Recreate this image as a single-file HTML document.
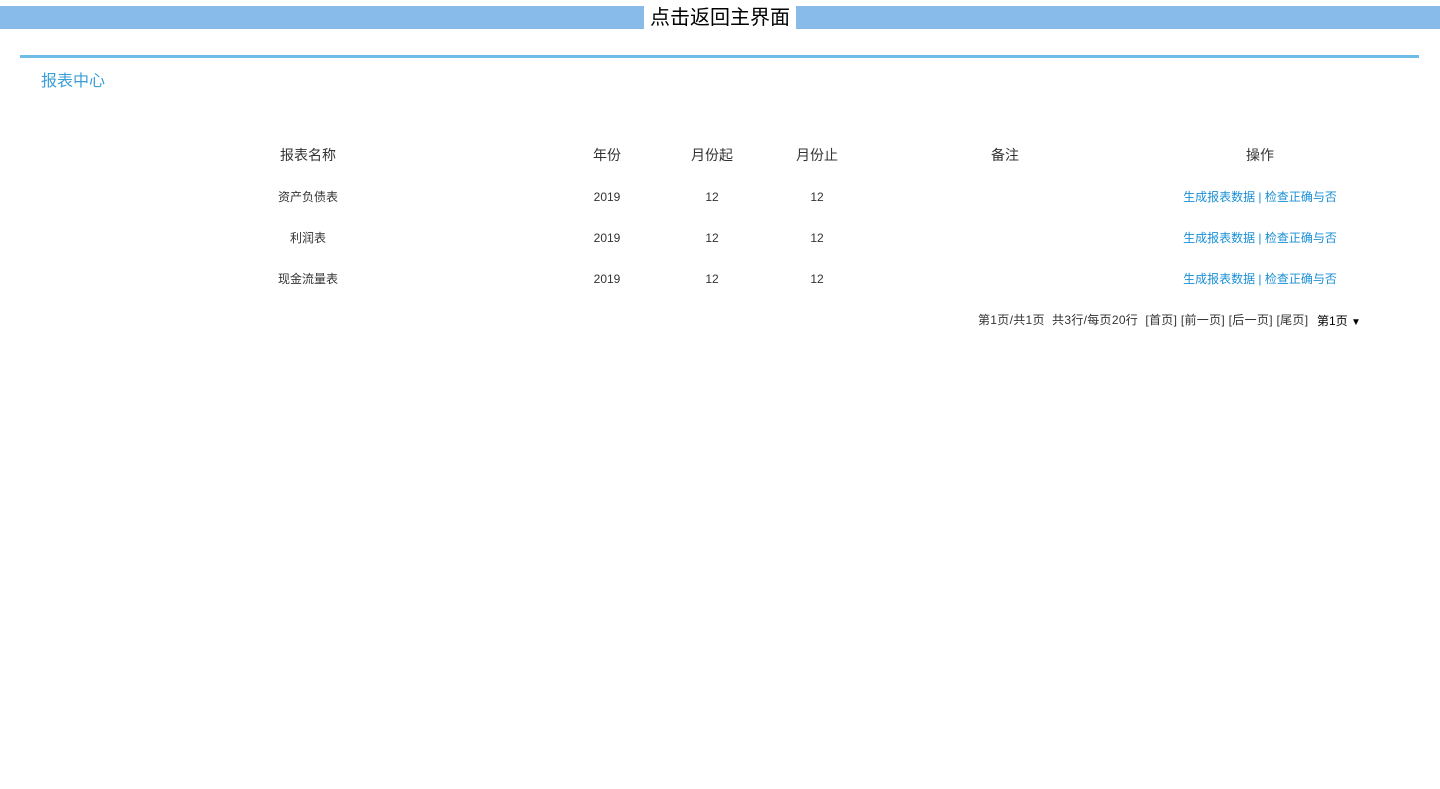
<!DOCTYPE html>
<html><head><meta charset="utf-8"><style>
body{margin:0;width:1440px;height:789px;background:#fff;position:relative;font-family:"Liberation Sans","Noto Sans CJK SC",sans-serif;overflow:hidden}
.a{position:absolute;white-space:nowrap}
.c{transform:translateX(-50%)}
.h{font-size:14px;color:#333;line-height:20px}
.d{font-size:12px;color:#333;line-height:16px}
.l{color:#1a8fd6}
</style></head><body>
<div class="a" style="left:0;top:6px;width:1440px;height:23px;background:#88bbea"></div>
<div class="a" style="left:644px;top:6px;width:152px;height:23px;background:#fff;font-size:20px;line-height:25px;text-align:center;color:#000">点击返回主界面</div>
<div class="a" style="left:20px;top:55px;width:1399px;height:3px;background:#6dbde8"></div>
<div class="a" style="left:41px;top:72px;font-size:16px;line-height:20px;color:#3a9fd8">报表中心</div>

<div class="a c h" style="left:308px;top:145px">报表名称</div>
<div class="a c h" style="left:607px;top:145px">年份</div>
<div class="a c h" style="left:712px;top:145px">月份起</div>
<div class="a c h" style="left:817px;top:145px">月份止</div>
<div class="a c h" style="left:1005px;top:145px">备注</div>
<div class="a c h" style="left:1260px;top:145px">操作</div>

<div class="a c d" style="left:308px;top:189px">资产负债表</div>
<div class="a c d" style="left:607px;top:189px">2019</div>
<div class="a c d" style="left:712px;top:189px">12</div>
<div class="a c d" style="left:817px;top:189px">12</div>
<div class="a c d l" style="left:1260px;top:189px">生成报表数据 | 检查正确与否</div>

<div class="a c d" style="left:308px;top:230px">利润表</div>
<div class="a c d" style="left:607px;top:230px">2019</div>
<div class="a c d" style="left:712px;top:230px">12</div>
<div class="a c d" style="left:817px;top:230px">12</div>
<div class="a c d l" style="left:1260px;top:230px">生成报表数据 | 检查正确与否</div>

<div class="a c d" style="left:308px;top:271px">现金流量表</div>
<div class="a c d" style="left:607px;top:271px">2019</div>
<div class="a c d" style="left:712px;top:271px">12</div>
<div class="a c d" style="left:817px;top:271px">12</div>
<div class="a c d l" style="left:1260px;top:271px">生成报表数据 | 检查正确与否</div>

<div class="a d" style="left:978px;top:312px;letter-spacing:0.3px">第1页/共1页&nbsp; 共3行/每页20行&nbsp; [首页] [前一页] [后一页] [尾页]</div>
<div class="a d" style="left:1317px;top:313px;color:#000">第1页 <span style="font-size:10px">▼</span></div>
</body></html>
